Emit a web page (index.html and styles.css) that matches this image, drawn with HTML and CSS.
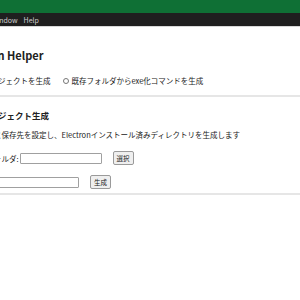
FILE: index.html
```html
<!DOCTYPE html>
<html lang="ja">
<head>
    <meta charset="UTF-8">
    <title>Electron Helper</title>
    <link rel="stylesheet" href="styles.css">
</head>
<body>
    <div class="titlebar"></div>
    <nav class="menubar">
        <span>File</span>
        <span>Edit</span>
        <span>View</span>
        <span>Window</span>
        <span>Help</span>
    </nav>

    <main class="app">
        <h1>Electron Helper</h1>
        <div class="modes">
            <label class="mode"><input type="radio" name="mode" checked>新規プロジェクトを生成</label>
            <label class="mode"><input type="radio" name="mode">既存フォルダからexe化コマンドを生成</label>
        </div>
        <hr>
        <section class="panel">
            <h2>新規プロジェクト生成</h2>
            <p class="desc">アプリ名と保存先を設定し、Electronインストール済みディレクトリを生成します</p>
            <div class="row">
                <label>保存先フォルダ:</label>
                <input type="text" class="field">
                <button>選択</button>
            </div>
            <div class="row">
                <label>アプリ名:</label>
                <input type="text" class="field">
                <button>生成</button>
            </div>
        </section>
        <hr class="end">
    </main>
</body>
</html>
```

FILE: styles.css
```css
body {
    margin: 0;
    overflow: hidden;
    background-color: #fff;
    color: #222;
    font-family: "Noto Sans CJK JP", "Noto Sans", sans-serif;
}
.titlebar {
    height: 13px;
    background-color: #0f7035;
}
.menubar {
    display: flex;
    gap: 6px;
    height: 13px;
    align-items: center;
    background-color: #1f1f1f;
    border-bottom: 1px solid #d8d8d8;
    font-size: 7px;
    color: #d0d0d0;
}
.menubar span:first-child {
    margin-left: -67px;
}
.app {
    margin-left: -36px;
    padding-top: 20px;
}
h1 {
    margin: 0 0 13px -5px;
    font-size: 11px;
    font-weight: 700;
    line-height: 16px;
}
.modes {
    display: flex;
    gap: 12px;
    margin-left: -5px;
    font-size: 7.5px;
    line-height: 10px;
}
.mode {
    display: flex;
    align-items: center;
}
.mode input {
    width: 6px;
    height: 6px;
    margin: 0 3px 0 0;
}
hr {
    margin: 9px 0 0;
    border: 0;
    border-top: 2px solid #e6e6e6;
}
.panel {
    padding-top: 12px;
}
h2 {
    margin: 0 0 9px;
    font-size: 8.5px;
    font-weight: 700;
    line-height: 12px;
}
.desc {
    margin: 0 0 11px;
    font-size: 7.5px;
    line-height: 10px;
}
.row {
    display: flex;
    align-items: center;
    margin-bottom: 10px;
    font-size: 7.5px;
}
.row + .row {
    margin-bottom: 0;
}
.field {
    box-sizing: border-box;
    width: 82px;
    height: 11px;
    margin: 0 11px 0 1px;
    padding: 0;
    border: 1px solid #a0a0a0;
    border-radius: 1px;
}
button {
    height: 14px;
    padding: 0 3px;
    border: 1px solid #9a9a9a;
    border-radius: 2px;
    background-color: #efefef;
    font-family: "Noto Sans CJK JP", sans-serif;
    font-size: 6.5px;
    color: #222;
}
hr.end {
    margin-top: 4px;
}
```
